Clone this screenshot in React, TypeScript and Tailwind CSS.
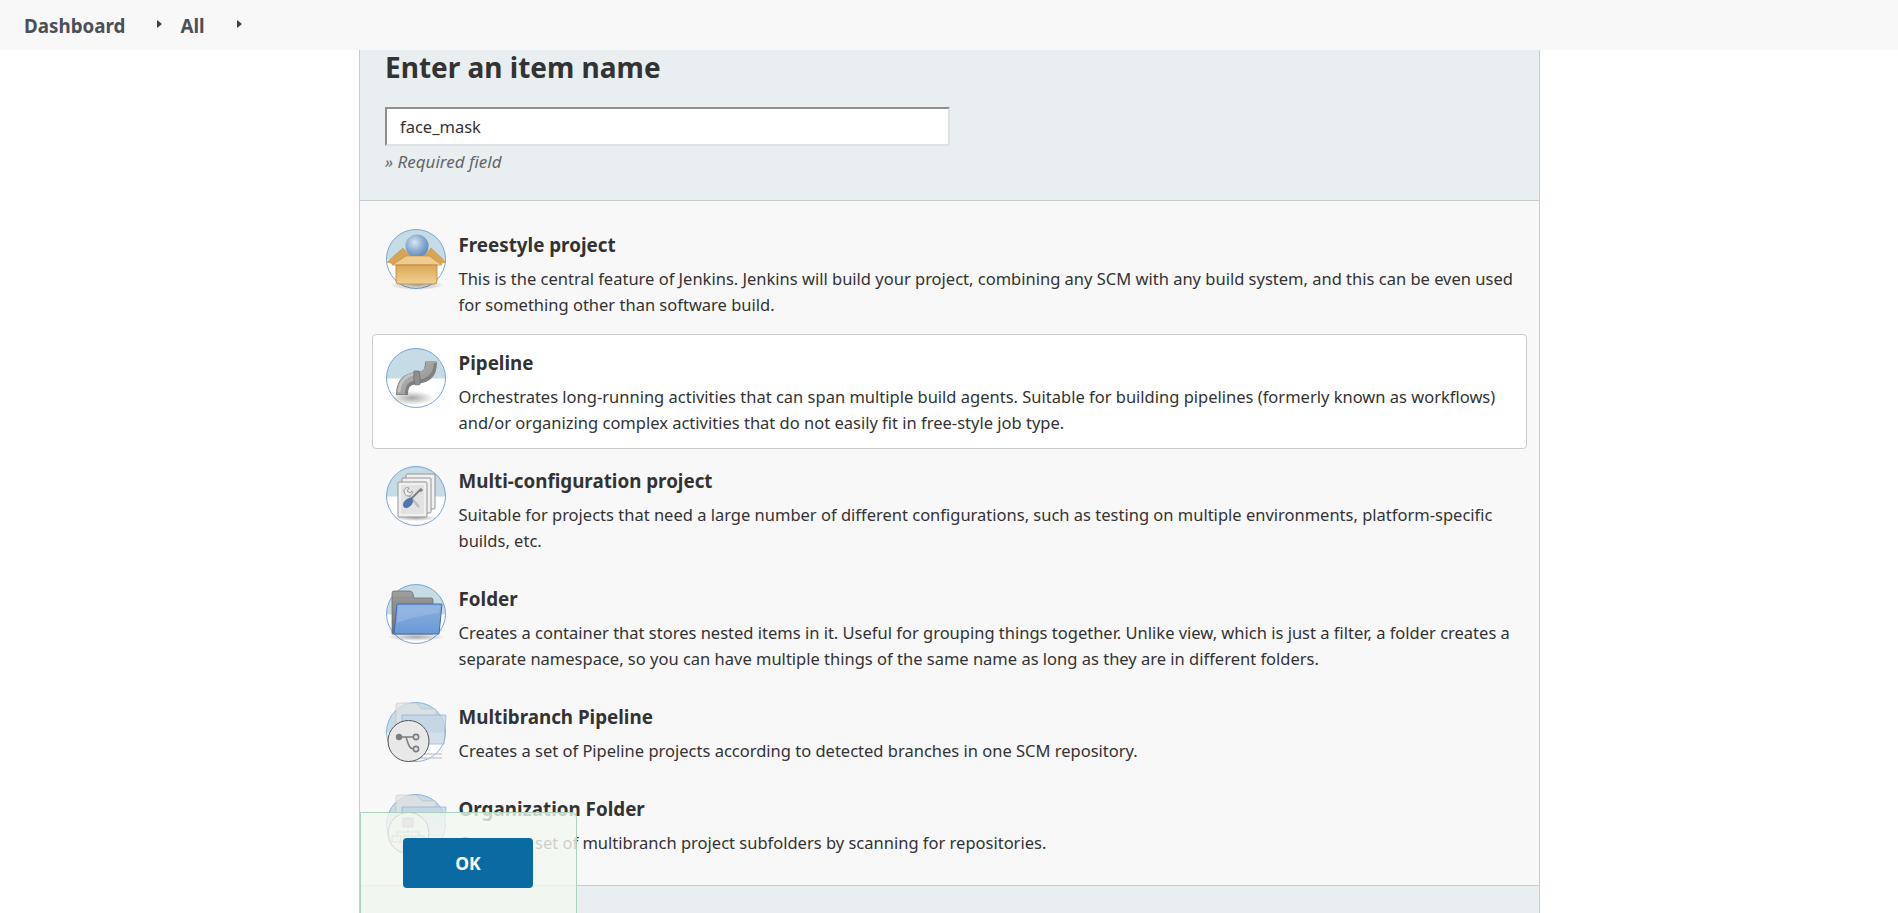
import React from "react";

const Base = ({ id, children, noCircleTop, className = "" }: { id: string; children?: React.ReactNode; noCircleTop?: boolean; className?: string }) => (
  <svg width="60" height="60" viewBox="0 0 60 60" className={`overflow-visible shrink-0 ${className}`}>
    <defs>
      <clipPath id={`c-${id}`}><rect x="0" y="0" width="60" height="30.5" /></clipPath>
    </defs>
    <circle cx="30" cy="30" r="29.5" fill="#fff" />
    <circle cx="30" cy="30" r="29.5" fill="#c5dbe5" clipPath={`url(#c-${id})`} />
    <circle cx="30" cy="30" r="29.5" fill="none" stroke={noCircleTop ? "#8db2dc" : "#7aa5d8"} strokeWidth="1" />
    {children}
  </svg>
);

const Defs = () => (
  <svg width="0" height="0" className="absolute">
    <defs>
      <radialGradient id="sphere" cx="0.4" cy="0.35" r="0.7">
        <stop offset="0" stopColor="#dbe6f2" />
        <stop offset="0.5" stopColor="#8fb0d6" />
        <stop offset="1" stopColor="#5c84b5" />
      </radialGradient>
      <linearGradient id="boxf" x1="0" y1="0" x2="0" y2="1">
        <stop offset="0" stopColor="#d9a757" />
        <stop offset="1" stopColor="#f3cf90" />
      </linearGradient>
      <linearGradient id="pipe" x1="0" y1="0" x2="1" y2="1">
        <stop offset="0" stopColor="#b5b5b5" />
        <stop offset="0.5" stopColor="#a5a5a5" />
        <stop offset="1" stopColor="#8d8d8d" />
      </linearGradient>
      <linearGradient id="fblue" x1="0" y1="0" x2="0" y2="1">
        <stop offset="0" stopColor="#8aafe0" />
        <stop offset="1" stopColor="#6b99d6" />
      </linearGradient>
      <linearGradient id="fgray" x1="0" y1="0" x2="0" y2="1">
        <stop offset="0" stopColor="#a0a0a0" />
        <stop offset="1" stopColor="#707070" />
      </linearGradient>
      <radialGradient id="shadow">
        <stop offset="0" stopColor="#000" stopOpacity="0.35" />
        <stop offset="1" stopColor="#000" stopOpacity="0" />
      </radialGradient>
    </defs>
  </svg>
);

const FreestyleIcon = () => (
  <Base id="fs" className="-mt-px">
    <ellipse cx="31" cy="56" rx="27" ry="5" fill="url(#shadow)" />
    <path d="M1 33 L17 19 L24 27 L10 36 Z" fill="#d8a556" stroke="#c08a3a" strokeWidth="0.5" />
    <path d="M60 33 L45 19 L38 27 L51 36 Z" fill="#d8a556" stroke="#c08a3a" strokeWidth="0.5" />
    <path d="M16 30 L46 30 L46 36 L16 36 Z" fill="#a9782f" />
    <circle cx="31" cy="17" r="11.5" fill="url(#sphere)" />
    <path d="M6 36 L20 27 L43 27 L56 36 Z" fill="#eecb8e" stroke="#c08a3a" strokeWidth="0.6" />
    <path d="M10 36 H51 V52 Q51 55 48 55 H13 Q10 55 10 52 Z" fill="url(#boxf)" stroke="#b98435" strokeWidth="0.8" />
  </Base>
);

const PipelineIcon = () => (
  <Base id="pl">
    <ellipse cx="26" cy="50" rx="22" ry="7" fill="url(#shadow)" />
    <path d="M16 47 C16 36 20 31 31 30 C40 29 45 26 45 14" fill="none" stroke="#808080" strokeWidth="12" />
    <path d="M15 46 C15 35 20 29 31 28 C39 27 44 24 44 14" fill="none" stroke="url(#pipe)" strokeWidth="8" />
    <path d="M13 44 C14 33 20 27 30 26" fill="none" stroke="#c4c4c4" strokeWidth="2.5" />
    <path d="M28 23 L33 23 Q35 30 34 36.5 L29 37 Q27 30 28 23 Z" fill="#8f8f8f" stroke="#6a6a6a" strokeWidth="0.7" />
    <path d="M39 13 H51 L50 15 H40 Z" fill="#a8a8a8" />
  </Base>
);

const Page = ({ x, y }: { x: number; y: number }) => (
  <rect x={x} y={y} width="29" height="35" fill="#f0f0f0" stroke="#8a8a8a" strokeWidth="0.9" rx="1" />
);

const MultiIcon = () => (
  <Base id="mc">
    <ellipse cx="30" cy="52" rx="22" ry="3" fill="url(#shadow)" />
    <Page x={20} y={8} />
    <Page x={16} y={12} />
    <Page x={12} y={16} />
    <rect x="15" y="19" width="23" height="29" fill="#e2e2e2" />
    <path d="M21 27 L33 41" stroke="#bdbdbd" strokeWidth="2.6" />
    <path d="M18 25 C18 22 21 21 23 22 L21 25 L24 27 L26 25 C27 28 25 30 22 30 C20 30 18 28 18 25 Z" fill="#ececec" stroke="#8f8f8f" strokeWidth="0.9" />
    <path d="M35 23 L24 34" stroke="#7d7d7d" strokeWidth="1.8" />
    <path d="M33 25 L35 22 L37 24 L35 26 Z" fill="#7d7d7d" />
    <ellipse cx="22" cy="37" rx="5.5" ry="3.6" transform="rotate(-45 22 37)" fill="#4f75b3" stroke="#35578f" strokeWidth="0.5" />
  </Base>
);

const FolderIcon = () => (
  <Base id="fo">
    <ellipse cx="30" cy="53" rx="29" ry="4" fill="url(#shadow)" />
    <path d="M6 50 V9 Q6 7 8 7 H24 Q26 7 27 10 L28 14 H45 Q47 14 47 16 V50 Z" fill="url(#fgray)" stroke="#666" strokeWidth="0.7" />
    <path d="M7 14 H27 M7 18 H46" stroke="#8a8a8a" strokeWidth="0.6" />
    <path d="M11 20 H56 L53 50 H8 Z" fill="url(#fblue)" stroke="#3f6cae" strokeWidth="1" />
    <path d="M12 22 H54 L53.2 29 Q32 31 11 39 Z" fill="#a5c2e6" opacity="0.45" />
  </Base>
);

const FadedFolder = () => (
  <g opacity="0.75">
    <path d="M10 40 V3 Q10 1 12 1 H30 L36 7 H50 V40 Z" fill="#e3e3e3" stroke="#bbb" strokeWidth="0.7" />
    <path d="M16 13 H60 L58 42 H16 Z" fill="#c6d5e6" stroke="#8fb0d8" strokeWidth="1" />
    <path d="M20 52 H56 M30 56 H56" stroke="#ccc" strokeWidth="2" />
  </g>
);

const MultibranchIcon = () => (
  <Base id="mb" noCircleTop>
    <FadedFolder />
    <circle cx="22.5" cy="39" r="20.5" fill="#e8e8e8" stroke="#555" strokeWidth="1" />
    <circle cx="13" cy="35" r="3.2" fill="#7d7d7d" />
    <circle cx="30" cy="35" r="2.6" fill="#e8e8e8" stroke="#7d7d7d" strokeWidth="1.6" />
    <circle cx="30" cy="47" r="2.6" fill="#e8e8e8" stroke="#7d7d7d" strokeWidth="1.6" />
    <path d="M13 35 H27.5 M20 35 C22 41 23 47 27.5 47" fill="none" stroke="#7d7d7d" strokeWidth="1.5" />
  </Base>
);

const OrgIcon = () => (
  <Base id="or" noCircleTop>
    <FadedFolder />
    <circle cx="22.5" cy="39" r="20.5" fill="#e8e8e8" stroke="#555" strokeWidth="1" />
    <rect x="17" y="24" width="10" height="9" fill="#c9a8c2" stroke="#9a7a94" strokeWidth="0.8" />
    <path d="M22 33 V38 M11 42 V38 H33 V42" fill="none" stroke="#888" strokeWidth="0.8" />
    <rect x="6" y="42" width="9" height="6" fill="none" stroke="#888" strokeWidth="0.8" />
    <rect x="17.5" y="42" width="9" height="6" fill="none" stroke="#888" strokeWidth="0.8" />
    <rect x="29" y="42" width="9" height="6" fill="none" stroke="#888" strokeWidth="0.8" />
    <rect x="17" y="51" width="10" height="6" fill="none" stroke="#888" strokeWidth="0.8" />
  </Base>
);

type Item = { title: string; lines: string[]; icon: React.ReactNode; active?: boolean };

const items: Item[] = [
  {
    title: "Freestyle project",
    icon: <FreestyleIcon />,
    lines: [
      "This is the central feature of Jenkins. Jenkins will build your project, combining any SCM with any build system, and this can be even used",
      "for something other than software build.",
    ],
  },
  {
    title: "Pipeline",
    icon: <PipelineIcon />,
    active: true,
    lines: [
      "Orchestrates long-running activities that can span multiple build agents. Suitable for building pipelines (formerly known as workflows)",
      "and/or organizing complex activities that do not easily fit in free-style job type.",
    ],
  },
  {
    title: "Multi-configuration project",
    icon: <MultiIcon />,
    lines: [
      "Suitable for projects that need a large number of different configurations, such as testing on multiple environments, platform-specific",
      "builds, etc.",
    ],
  },
  {
    title: "Folder",
    icon: <FolderIcon />,
    lines: [
      "Creates a container that stores nested items in it. Useful for grouping things together. Unlike view, which is just a filter, a folder creates a",
      "separate namespace, so you can have multiple things of the same name as long as they are in different folders.",
    ],
  },
  {
    title: "Multibranch Pipeline",
    icon: <MultibranchIcon />,
    lines: ["Creates a set of Pipeline projects according to detected branches in one SCM repository."],
  },
  {
    title: "Organization Folder",
    icon: <OrgIcon />,
    lines: ["Creates a set of multibranch project subfolders by scanning for repositories."],
  },
];

const Crumb = ({ children }: { children: React.ReactNode }) => (
  <span className="text-[18.8px] font-bold text-[#4b5058]">{children}</span>
);

const Arrow = () => (
  <svg width="5" height="8" viewBox="0 0 5 8" className="block -mt-[6px]"><path d="M0 0 L5 4 L0 8 Z" fill="#3c3f44" /></svg>
);

export default function App() {
  return (
    <div className="h-[913px] overflow-hidden bg-white text-[#333] font-['Noto_Sans','Open_Sans',sans-serif]">
      <Defs />
      <nav className="h-[50px] bg-[#f8f8f8] flex items-center pl-6 pt-[3px]">
        <Crumb>Dashboard</Crumb>
        <span className="ml-8"><Arrow /></span>
        <span className="ml-[18px]"><Crumb>All</Crumb></span>
        <span className="ml-8"><Arrow /></span>
      </nav>
      <main className="relative ml-[359px] w-[1181px] h-[863px] border-x border-[#c9cccf] bg-[#f8f8f8] flex flex-col">
        <section className="h-[151px] shrink-0 bg-[#e9eef1] border-b border-[#c9cccf] pl-[25px]">
          <h1 className="text-[28px] leading-[34px] font-bold mt-0">Enter an item name</h1>
          <input
            readOnly
            value="face_mask"
            className="block mt-[23px] w-[565px] h-[39px] bg-white pl-[13px] text-[16.5px] text-[#333] border-2 border-t-[#8f8f8f] border-l-[#8f8f8f] border-r-[#dfe3e6] border-b-[#dfe3e6] outline-none"
          />
          <p className="mt-[5px] text-[17px] leading-[22px] italic text-[#666]">» Required field</p>
        </section>
        <section className="flex-1 pt-[15px] pl-[12px] pr-[12px]">
          {items.map((it) => (
            <div
              key={it.title}
              className={`flex mb-[3px] rounded-[4px] border pt-[13px] pb-[12px] pl-[13px] ${
                it.active ? "bg-white border-[#c9cccf]" : "border-transparent"
              }`}
            >
              {it.icon}
              <div className="ml-[12.5px]">
                <h2 className="text-[18.8px] leading-[31px] font-bold mb-[5px]">{it.title}</h2>
                {it.lines.map((l) => (
                  <p key={l} className="text-[16.5px] leading-[26px] whitespace-nowrap">{l}</p>
                ))}
              </div>
            </div>
          ))}
        </section>
        <section className="h-[28px] shrink-0 bg-[#e9eef1] border-t border-[#c9cccf]" />
        <div className="absolute left-0 top-[762px] w-[217px] h-[101px] bg-[#f3f7f1]/80 border border-b-0 border-[#a9d3bc] rounded-tr-[6px] pl-[42px] pt-[25px]">
          <button className="w-[130px] h-[50px] bg-[#0b6aa2] rounded-[4px] text-white font-bold text-[17.5px]">OK</button>
        </div>
      </main>
    </div>
  );
}
